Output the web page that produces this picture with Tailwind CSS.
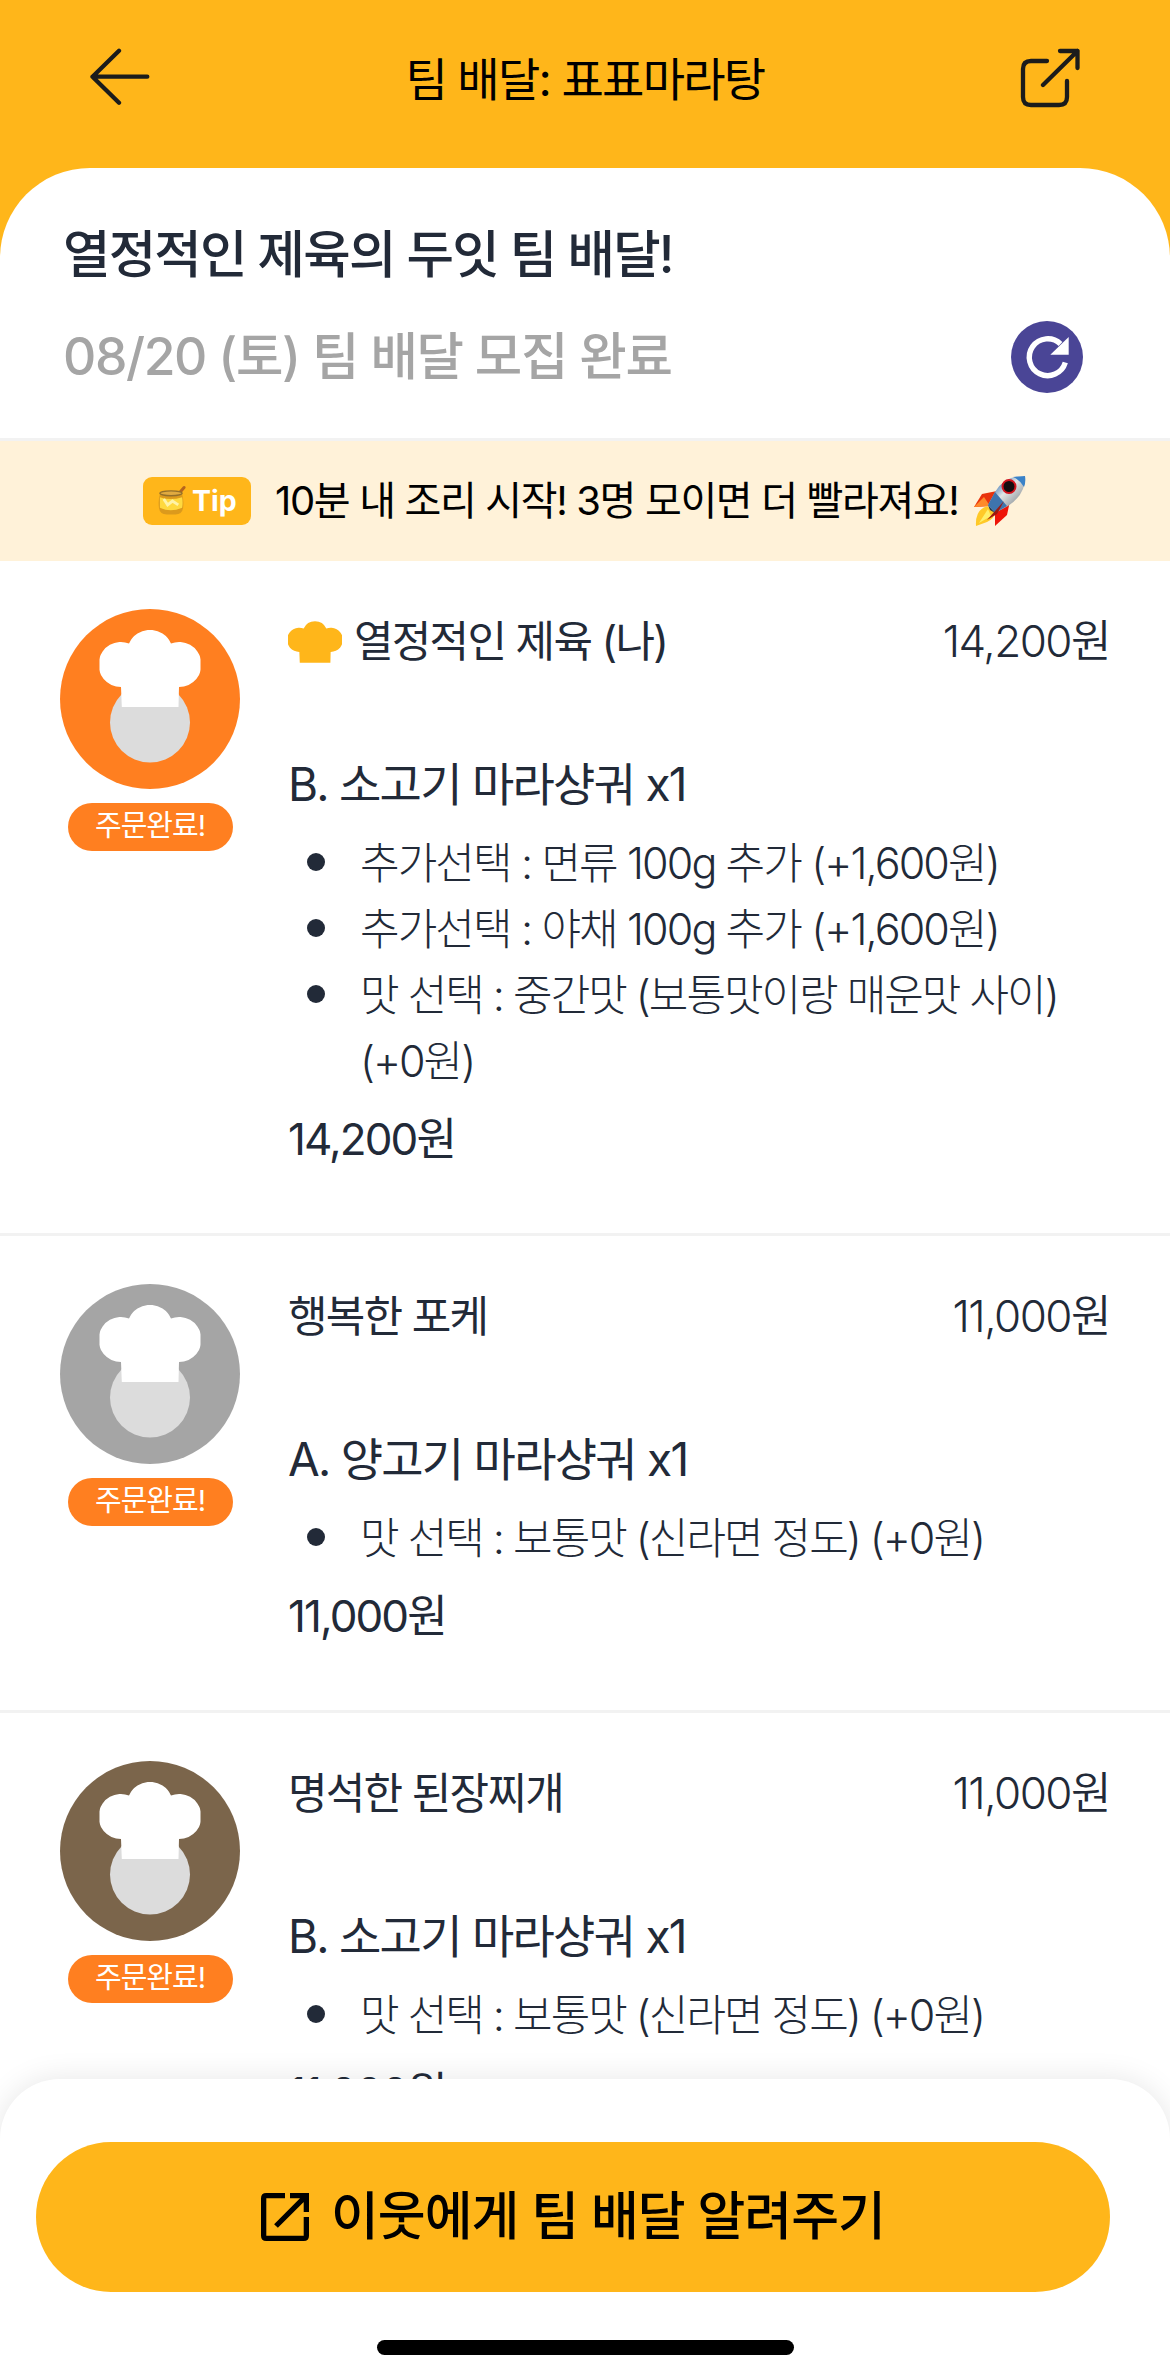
<!DOCTYPE html>
<html lang="ko">
<head>
<meta charset="utf-8">
<title>팀 배달</title>
<script src="https://cdn.jsdelivr.net/npm/@tailwindcss/browser@4"></script>
</head>
<body class="bg-white">
<svg class="hidden">
  <symbol id="hat" viewBox="0 0 100 77"><path d="M21 57A22.500 22.500 0 1 1 29 13.500A23 23 0 0 1 71 13.500A22.500 22.500 0 1 1 79 57L78.500 77H21.800Z"/></symbol>
</svg>
<div class="relative flex h-[2379px] w-[1170px] flex-col overflow-hidden bg-[#ffb61a] font-['Inter','Noto_Sans_CJK_KR',sans-serif] text-[#222a38]">
  <header class="flex h-[168px] shrink-0 items-start justify-between px-[90px] pt-[48px]">
    <svg class="h-[60px] w-[60px]" viewBox="0 0 60 60" fill="none" stroke="#1b1c1c" stroke-width="4.300" stroke-linecap="round" stroke-linejoin="round"><path d="M29 2.700L2.500 28.700L29 54.700M2.500 28.700H57.300"/></svg>
    <h1 class="h-[62px] text-[46px] leading-[62px] tracking-[-1.700px] text-black">팀 배달: 표표마라탕</h1>
    <svg class="h-[60px] w-[60px]" viewBox="0 0 60 60" fill="none" stroke="#1b1c1c" stroke-width="4.300" stroke-linecap="round" stroke-linejoin="round"><path d="M27 13H11Q3 13 3 21V49Q3 57 11 57H39Q47 57 47 49V33M40 3H57.500V20M57.500 3L23 37"/></svg>
  </header>
  <main class="flex grow flex-col rounded-t-[90px] bg-white">
    <section class="flex h-[273px] shrink-0 items-end justify-between border-b-[3px] border-[#f2f2f2] pl-[63px] pr-[87px]">
      <div class="flex h-full flex-col pt-[51px]">
        <h2 class="text-[51.600px] font-medium leading-[70px] tracking-[-1.800px]">열정적인 제육의 두잇 팀 배달!</h2>
        <p class="mt-[32px] text-[51.600px] font-medium leading-[70px] tracking-[-1.400px] text-[#a5a5a5]">08/20 (토) 팀 배달 모집 완료</p>
      </div>
      <svg class="mb-[45px] h-[72px] w-[72px]" viewBox="0 0 72 72"><circle cx="36" cy="36" r="36" fill="#4a4596"/><path d="M54.300 41.500A18.400 18.400 0 1 1 49.500 23" fill="none" stroke="#fff" stroke-width="5.400"/><path d="M57.700 16V33.700H39.300Z" fill="#fff"/></svg>
    </section>
    <section class="flex h-[120px] shrink-0 items-center bg-[#fff2d9] pl-[143px]">
      <div class="flex h-[48px] w-[108px] items-center rounded-[9px] bg-[#ffb61a] pl-[14px]">
        <svg class="h-[32px] w-[29px]" viewBox="0 0 30 32"><path d="M22 9L28 2" stroke="#b5651d" stroke-width="3" stroke-linecap="round"/><path d="M3 9H26Q28 15 27 23Q26 30 19 30H10Q3 30 2 23Q1 15 3 9Z" fill="#dc9a1c"/><path d="M3 12Q14 16 26 12Q27 18 26 23Q14 28 3 23Z" fill="#ffd93f"/><path d="M7 14L11 20L16 16L22 20" stroke="#fff3a8" stroke-width="3" fill="none"/><ellipse cx="14.500" cy="8" rx="11.500" ry="2.500" fill="#e0aa40" stroke="#94702a" stroke-width="1.500"/></svg>
        <span class="ml-[6px] text-[28.500px] font-bold leading-[48px] text-white">Tip</span>
      </div>
      <p class="ml-[24px] text-[40px] leading-[60px] tracking-[-1.350px] text-black">10분 내 조리 시작! 3명 모이면 더 빨라져요!</p>
      <svg class="ml-[14px] h-[54px] w-[54px]" viewBox="0 0 54 54"><defs><linearGradient id="b" x1="0" y1="0" x2="1" y2="1"><stop offset="0.200" stop-color="#3f77b5"/><stop offset="0.450" stop-color="#e2e6e6"/><stop offset="0.800" stop-color="#8b9297"/></linearGradient></defs><path d="M1 33L9 20L24 17L17 32Z" fill="#e8330c"/><path d="M1 33L11 23L17 32Z" fill="#ff8a2a"/><path d="M37 27L34 41L22 52V38Z" fill="#ee1408"/><path d="M14 32Q2 36 3 52L14 48Q22 44 22 38Z" fill="#ffc928"/><path d="M15 35L6 49L18 42Z" fill="#fff06a"/><path d="M52 2Q32 1 22 18L15 31L22 39L35 32Q53 20 52 2Z" fill="url(#b)"/><path d="M52 2L40 3Q47 6 51 13Q53 8 52 2Z" fill="#3a82c8"/><path d="M22 18L15 31L22 39L34 32Z" fill="#3e74ad"/><path d="M31 27L14 46L24 40Z" fill="#9c1a10"/><path d="M15 31L22 39L17 36Z" fill="#1e3550"/><circle cx="36" cy="12.500" r="6.500" fill="#150d10" stroke="#d3141e" stroke-width="2"/></svg>
    </section>

    <article class="flex shrink-0 border-b-[3px] border-[#f2f2f2] px-[60px] pt-[48px] pb-[61px]">
      <div class="flex w-[180px] shrink-0 flex-col items-center">
        <svg class="h-[180px] w-[180px]" viewBox="0 0 180 180"><circle cx="90" cy="90" r="90" fill="#ff7f20"/><circle cx="90" cy="113.500" r="40" fill="#dcdcdc"/><use href="#hat" x="39.500" y="21" width="101" height="77" fill="#fff"/></svg>
        <span class="mt-[14px] h-[48px] w-[165px] rounded-full bg-[#ff7f20] text-center text-[29px] leading-[46px] tracking-[-1px] text-white">주문완료!</span>
      </div>
      <div class="ml-[48px] flex grow flex-col">
        <div class="flex h-[66px] items-center text-[43px] leading-[64px] tracking-[-1.750px]">
          <svg class="mr-[12px] h-[42px] w-[54px] fill-[#ffb61a]"><use href="#hat" width="54" height="42"/></svg>
          <h3 class="h-[66px]">열정적인 제육 (나)</h3><span class="ml-auto h-[66px] text-[44px] font-[350] tracking-[-1.500px]">14,200원</span>
        </div>
        <h4 class="mt-[73px] text-[46px] leading-[72px] tracking-[-1.750px]">B. 소고기 마라샹궈 x1</h4>
        <ul class="mt-[10px] text-[43px] font-light leading-[66px] tracking-[-2px]">
          <li class="flex"><i class="mt-[23px] ml-[19px] mr-[35px] h-[18px] w-[18px] shrink-0 rounded-full bg-[#222a38]"></i><span class="tracking-[-1.880px]">추가선택 : 면류 100g 추가 (+1,600원)</span></li>
          <li class="flex"><i class="mt-[23px] ml-[19px] mr-[35px] h-[18px] w-[18px] shrink-0 rounded-full bg-[#222a38]"></i><span class="tracking-[-1.880px]">추가선택 : 야채 100g 추가 (+1,600원)</span></li>
          <li class="flex"><i class="mt-[23px] ml-[19px] mr-[35px] h-[18px] w-[18px] shrink-0 rounded-full bg-[#222a38]"></i><span class="whitespace-nowrap">맛 선택 : 중간맛 (보통맛이랑 매운맛 사이)<br>(+0원)</span></li>
        </ul>
        <p class="mt-[12px] text-[44px] leading-[66px] tracking-[-1.900px]">14,200원</p>
      </div>
    </article>

    <article class="flex shrink-0 border-b-[3px] border-[#f2f2f2] px-[60px] pt-[48px] pb-[61px]">
      <div class="flex w-[180px] shrink-0 flex-col items-center">
        <svg class="h-[180px] w-[180px]" viewBox="0 0 180 180"><circle cx="90" cy="90" r="90" fill="#a5a5a5"/><circle cx="90" cy="113.500" r="40" fill="#dcdcdc"/><use href="#hat" x="39.500" y="21" width="101" height="77" fill="#fff"/></svg>
        <span class="mt-[14px] h-[48px] w-[165px] rounded-full bg-[#ff7f20] text-center text-[29px] leading-[46px] tracking-[-1px] text-white">주문완료!</span>
      </div>
      <div class="ml-[48px] flex grow flex-col">
        <div class="flex h-[66px] items-center text-[43px] leading-[64px] tracking-[-1.750px]"><h3 class="h-[66px]">행복한 포케</h3><span class="ml-auto h-[66px] text-[44px] font-[350] tracking-[-1.500px]">11,000원</span></div>
        <h4 class="mt-[73px] text-[46px] leading-[72px] tracking-[-1.750px]">A. 양고기 마라샹궈 x1</h4>
        <ul class="mt-[10px] text-[43px] font-light leading-[66px] tracking-[-2px]">
          <li class="flex"><i class="mt-[23px] ml-[19px] mr-[35px] h-[18px] w-[18px] shrink-0 rounded-full bg-[#222a38]"></i><span>맛 선택 : 보통맛 (신라면 정도) (+0원)</span></li>
        </ul>
        <p class="mt-[12px] text-[44px] leading-[66px] tracking-[-1.900px]">11,000원</p>
      </div>
    </article>

    <article class="flex shrink-0 px-[60px] pt-[48px]">
      <div class="flex w-[180px] shrink-0 flex-col items-center">
        <svg class="h-[180px] w-[180px]" viewBox="0 0 180 180"><circle cx="90" cy="90" r="90" fill="#7b654b"/><circle cx="90" cy="113.500" r="40" fill="#dcdcdc"/><use href="#hat" x="39.500" y="21" width="101" height="77" fill="#fff"/></svg>
        <span class="mt-[14px] h-[48px] w-[165px] rounded-full bg-[#ff7f20] text-center text-[29px] leading-[46px] tracking-[-1px] text-white">주문완료!</span>
      </div>
      <div class="ml-[48px] flex grow flex-col">
        <div class="flex h-[66px] items-center text-[43px] leading-[64px] tracking-[-1.750px]"><h3 class="h-[66px]">명석한 된장찌개</h3><span class="ml-auto h-[66px] text-[44px] font-[350] tracking-[-1.500px]">11,000원</span></div>
        <h4 class="mt-[73px] text-[46px] leading-[72px] tracking-[-1.750px]">B. 소고기 마라샹궈 x1</h4>
        <ul class="mt-[10px] text-[43px] font-light leading-[66px] tracking-[-2px]">
          <li class="flex"><i class="mt-[23px] ml-[19px] mr-[35px] h-[18px] w-[18px] shrink-0 rounded-full bg-[#222a38]"></i><span>맛 선택 : 보통맛 (신라면 정도) (+0원)</span></li>
        </ul>
        <p class="mt-[12px] text-[44px] leading-[66px] tracking-[-1.900px]">11,000원</p>
      </div>
    </article>
  </main>

  <footer class="absolute inset-x-0 bottom-0 flex h-[300px] flex-col items-center rounded-t-[60px] bg-white pt-[63px] shadow-[0_0_30px_rgba(0,0,0,0.1)]">
    <button class="ml-[-24px] flex h-[150px] w-[1074px] items-center rounded-full bg-[#ffb61a] pl-[225px] text-black">
      <svg class="h-[48px] w-[48px]" viewBox="0 0 48 48" fill="none" stroke="#000" stroke-width="5.300"><path d="M24 2.650H5.300Q2.650 2.650 2.650 5.300V42.700Q2.650 45.350 5.300 45.350H42.700Q45.350 45.350 45.350 42.700V24M29 2.650H45.350V19M45.350 2.650L15 33"/></svg>
      <span class="ml-[22px] text-[52px] font-medium leading-[70px] tracking-[-1px]">이웃에게 팀 배달 알려주기</span>
    </button>
    <div class="mt-[48px] h-[15px] w-[417px] rounded-full bg-black"></div>
  </footer>
</div>
</body>
</html>
